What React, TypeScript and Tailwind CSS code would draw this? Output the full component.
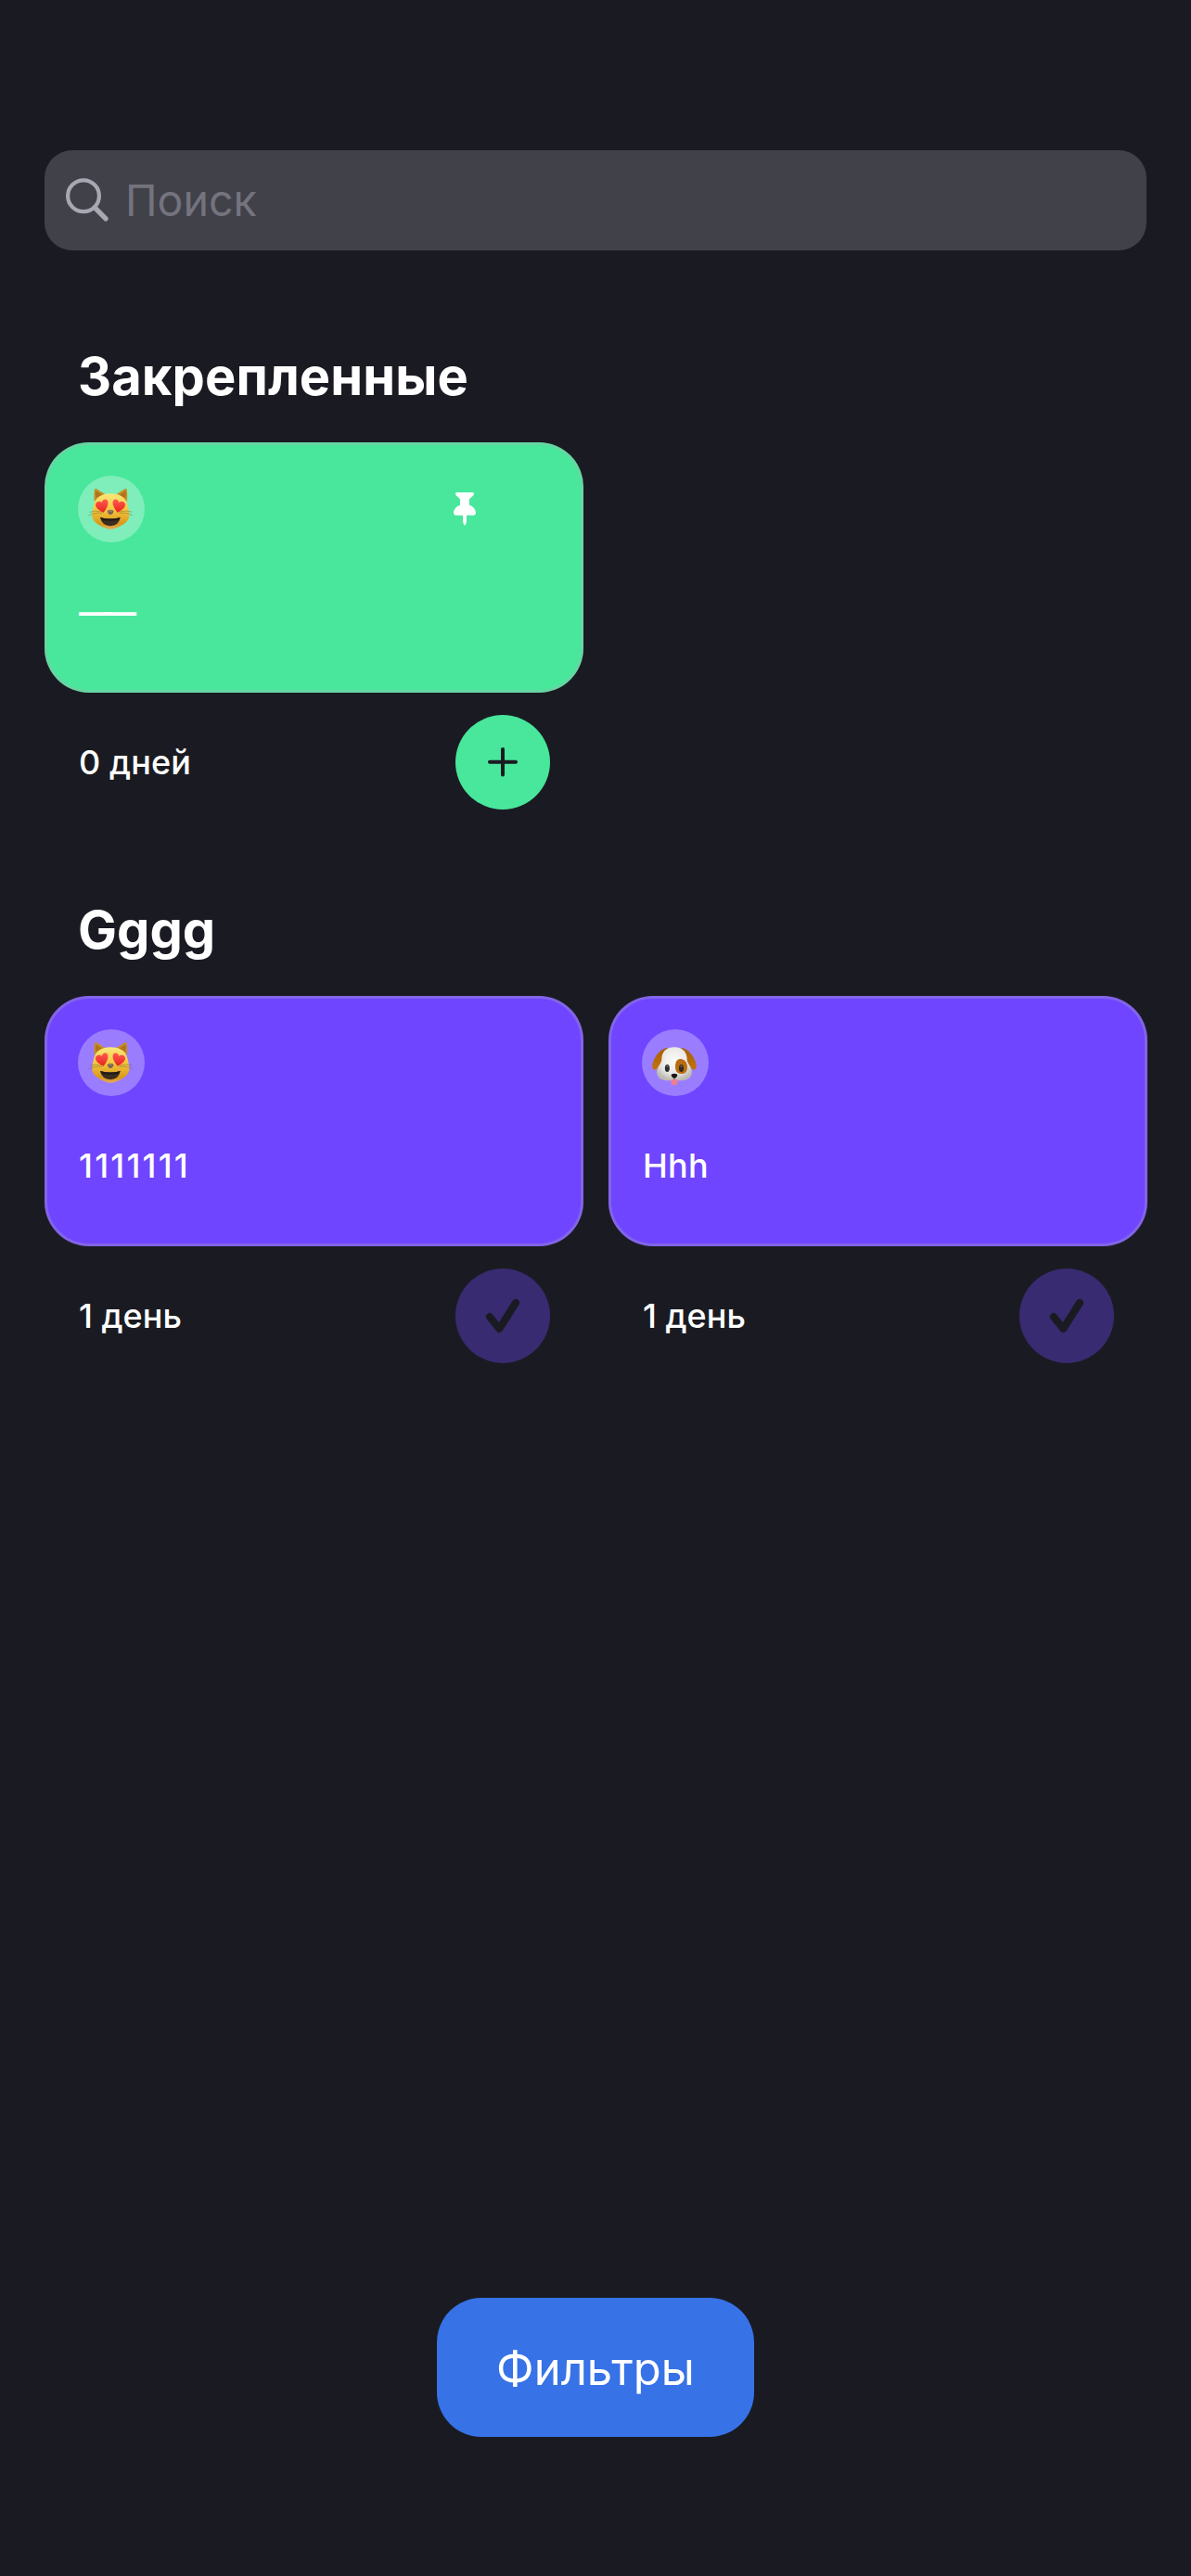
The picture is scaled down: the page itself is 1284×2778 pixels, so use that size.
import type { ReactNode } from 'react'

function CatIcon() {
  return (
    <svg viewBox="42 39 216 216" className="size-[72px]" role="img" aria-label="cat">
      <defs>
        <linearGradient id="catFace" x1="0" y1="0" x2="0" y2="1">
          <stop offset="0" stopColor="#fbe77c" />
          <stop offset="0.45" stopColor="#f3c63f" />
          <stop offset="0.85" stopColor="#d9981a" />
          <stop offset="1" stopColor="#e8a860" />
        </linearGradient>
        <linearGradient id="catHeart" x1="0" y1="0" x2="0" y2="1">
          <stop offset="0" stopColor="#ff5a50" />
          <stop offset="1" stopColor="#e8251f" />
        </linearGradient>
      </defs>
      <path d="M95 122 Q93 94 97 82 Q98 79 102 82 L130 99 Z" fill="#c98d22" />
      <path d="M201 122 Q203 94 199 82 Q198 79 194 82 L166 99 Z" fill="#c98d22" />
      <path d="M100 112 Q98 96 100 88 L121 102 Z" fill="#b0741c" />
      <path d="M196 112 Q198 96 196 88 L175 102 Z" fill="#b0741c" />
      <path d="M148 97 C178 97 195 110 201 128 C205 144 209 157 208 170 C206 189 184 201 166 208 Q148 217 130 208 C112 201 90 189 88 170 C87 157 91 144 95 128 C101 110 118 97 148 97 Z" fill="url(#catFace)" />
      <g stroke="#6e6030" strokeWidth="2" fill="none" opacity="0.6">
        <path d="M121 156 Q98 150 80 157" />
        <path d="M121 160 Q96 157 77 168" />
        <path d="M176 156 Q199 150 217 156" />
        <path d="M176 160 Q201 157 219 168" />
      </g>
      <path d="M125 158 C114 153 99 145 99 133 C99 121 114 119 119 126 C121 114 136 111 139 123 C141 136 132 149 125 158 Z" fill="url(#catHeart)" />
      <path d="M170 158 C163 149 153 136 155 123 C158 111 173 114 175 126 C180 119 195 121 195 133 C195 145 180 153 170 158 Z" fill="url(#catHeart)" />
      <path d="M137 154 Q139 149 147 149 Q156 149 158 154 Q155 165 147 165 Q140 165 137 154 Z" fill="#7c6354" />
      <path d="M140 154 Q147 149 155 154 Q147 157 140 154 Z" fill="#a78d7d" />
      <path d="M114 174 Q147 183 179 174 Q174 201 147 202 Q120 201 114 174 Z" fill="#3a2c20" />
      <path d="M114 174 Q147 183 179 174 Q178 180 173 183 Q147 187 120 183 Q116 180 114 174 Z" fill="#211a15" />
    </svg>
  )
}

function DogIcon() {
  return (
    <svg viewBox="156 150 216 216" className="size-[72px]" role="img" aria-label="dog">
      <defs>
        <radialGradient id="dogFace" cx="0.5" cy="0.4" r="0.6">
          <stop offset="0" stopColor="#fbfbf9" />
          <stop offset="0.65" stopColor="#e9e8e4" />
          <stop offset="1" stopColor="#bcb9b3" />
        </radialGradient>
        <linearGradient id="dogEar" x1="0" y1="0" x2="0" y2="1">
          <stop offset="0" stopColor="#a35f08" />
          <stop offset="1" stopColor="#c4730d" />
        </linearGradient>
      </defs>
      <path d="M239 210 C218 210 194 239 190 266 C188 279 198 283 205 279 C216 273 220 262 226 245 Z" fill="url(#dogEar)" />
      <path d="M283 210 C304 210 328 239 332 266 C334 279 324 283 317 279 C306 273 302 262 296 245 Z" fill="url(#dogEar)" />
      <path d="M261 208 C289 208 302 225 302 248 C303 263 318 270 318 288 C318 308 298 316 280 316 L241 316 C223 316 204 308 204 288 C204 270 219 263 220 248 C220 225 233 208 261 208 Z" fill="url(#dogFace)" />
      <path d="M279 246 C293 245 303 257 303 272 C303 286 296 294 284 294 C270 294 264 285 264 270 C264 257 269 247 279 246 Z" fill="#b96c10" />
      <ellipse cx="238" cy="276" rx="7.5" ry="12" fill="#2b2b2d" />
      <ellipse cx="283.5" cy="276" rx="7.5" ry="12" fill="#33291f" />
      <ellipse cx="238" cy="270" rx="3" ry="3.5" fill="#66666a" />
      <ellipse cx="283.5" cy="270" rx="3" ry="3.5" fill="#66666a" />
      <path d="M250 314 Q261 309 272 314 Q273 331 261 331 Q249 331 250 314 Z" fill="#ee7f92" />
      <path d="M261 305 L261 313" stroke="#55504c" strokeWidth="2" />
      <path d="M251 299 Q251 293 261 293 Q271 293 271 299 Q268 308 261 309 Q254 308 251 299 Z" fill="#171717" />
    </svg>
  )
}

function PinIcon() {
  return (
    <svg viewBox="267 183 72 108" className="h-[36px] w-[24px]" fill="#fff">
      <path d="M277 183 H329 Q333 183 333 187 C333 194 323 199 318 205 V224 C330 227 339 238 339 250 Q339 257 332 257 H309 V277 Q308 284 303 291 Q298 284 297 277 V257 H274 Q267 257 267 250 C267 238 276 227 288 224 V205 C283 199 273 194 273 187 Q273 183 277 183 Z" />
    </svg>
  )
}

function PlusIcon() {
  return (
    <svg viewBox="0 0 32 32" className="size-[32px]" stroke="#1A1B22" strokeWidth="4" strokeLinecap="round">
      <path d="M16 2V29.5M2 15.7H30" />
    </svg>
  )
}

function CheckIcon() {
  return (
    <svg viewBox="0 0 102 102" className="size-[102px]" fill="none" stroke="#1A1B22" strokeWidth="8" strokeLinecap="round" strokeLinejoin="round">
      <path d="M36.9 52L47.3 65L65 37" />
    </svg>
  )
}

interface TrackerProps {
  emoji: ReactNode
  title: string
  titleClass: string
  days: string
  color: string
  pinned?: boolean
  done?: boolean
}

function Tracker({ emoji, title, titleClass, days, color, pinned, done }: TrackerProps) {
  return (
    <article className="w-[581px] shrink-0">
      <div className={`relative h-[270px] rounded-[48px] px-9 pt-9 ${color}`}>
        <div className="pointer-events-none absolute inset-0 rounded-[48px] border-[3px] border-[#AEAFB4]/30" />
        <div className="flex items-start justify-between">
          <div className="size-[72px] rounded-full bg-white/30">{emoji}</div>
          {pinned && (
            <div className="mt-[18px] mr-20">
              <PinIcon />
            </div>
          )}
        </div>
        <p className={`mt-[55px] ml-px text-[36px] leading-[40px] whitespace-nowrap text-white ${titleClass}`}>{title}</p>
      </div>
      <div className="mt-6 flex h-[102px] items-center justify-between pr-9 pl-[37px]">
        <span className="text-[36px] leading-[40px] font-medium text-white">{days}</span>
        <button className={`flex size-[102px] items-center justify-center rounded-full ${done ? 'bg-[#392B71]' : color}`}>
          {done ? <CheckIcon /> : <PlusIcon />}
        </button>
      </div>
    </article>
  )
}

function Section({ title, className, children }: { title: string; className: string; children: ReactNode }) {
  return (
    <section className={className}>
      <h2 className="ml-[36px] text-[56px] leading-[64px] font-bold text-white">{title}</h2>
      <div className="mt-[39px] flex gap-[27px]">{children}</div>
    </section>
  )
}

export default function App() {
  return (
    <main className="flex h-[2778px] w-[1284px] flex-col overflow-hidden bg-[#1A1B22] px-12 pt-[162px] pb-[150px] font-['Inter',sans-serif]">
      <div className="flex h-[108px] shrink-0 items-center rounded-[30px] bg-[#41414A] pl-[23px]">
        <svg viewBox="0 0 46 48" className="h-[48px] w-[46px]" fill="none" stroke="#A8A7B2" strokeLinecap="round">
          <circle cx="19" cy="19.3" r="16.9" strokeWidth="4.2" />
          <path d="M31.2 31.8L43 43.800" strokeWidth="5.4" />
        </svg>
        <span className="ml-[18px] text-[46.5px] leading-[56px] text-[#74737D]">Поиск</span>
      </div>
      <Section title="Закрепленные" className="mt-[104px] tracking-[0.1px]">
        <Tracker emoji={<CatIcon />} title="——" titleClass="font-semibold tracking-[-10px]" days="0 дней" color="bg-[#48E79C]" pinned />
      </Section>
      <Section title="Gggg" className="mt-[98px]">
        <Tracker emoji={<CatIcon />} title="1111111" titleClass="font-medium tracking-[2.2px]" days="1 день" color="bg-[#6F45FF]" done />
        <Tracker emoji={<DogIcon />} title="Hhh" titleClass="font-medium tracking-[0.3px]" days="1 день" color="bg-[#6F45FF]" done />
      </Section>
      <button className="mt-auto h-[150px] w-[342px] shrink-0 self-center rounded-[48px] bg-[#3772E7] pt-[4px] text-[49px] text-white">
        Фильтры
      </button>
    </main>
  )
}
